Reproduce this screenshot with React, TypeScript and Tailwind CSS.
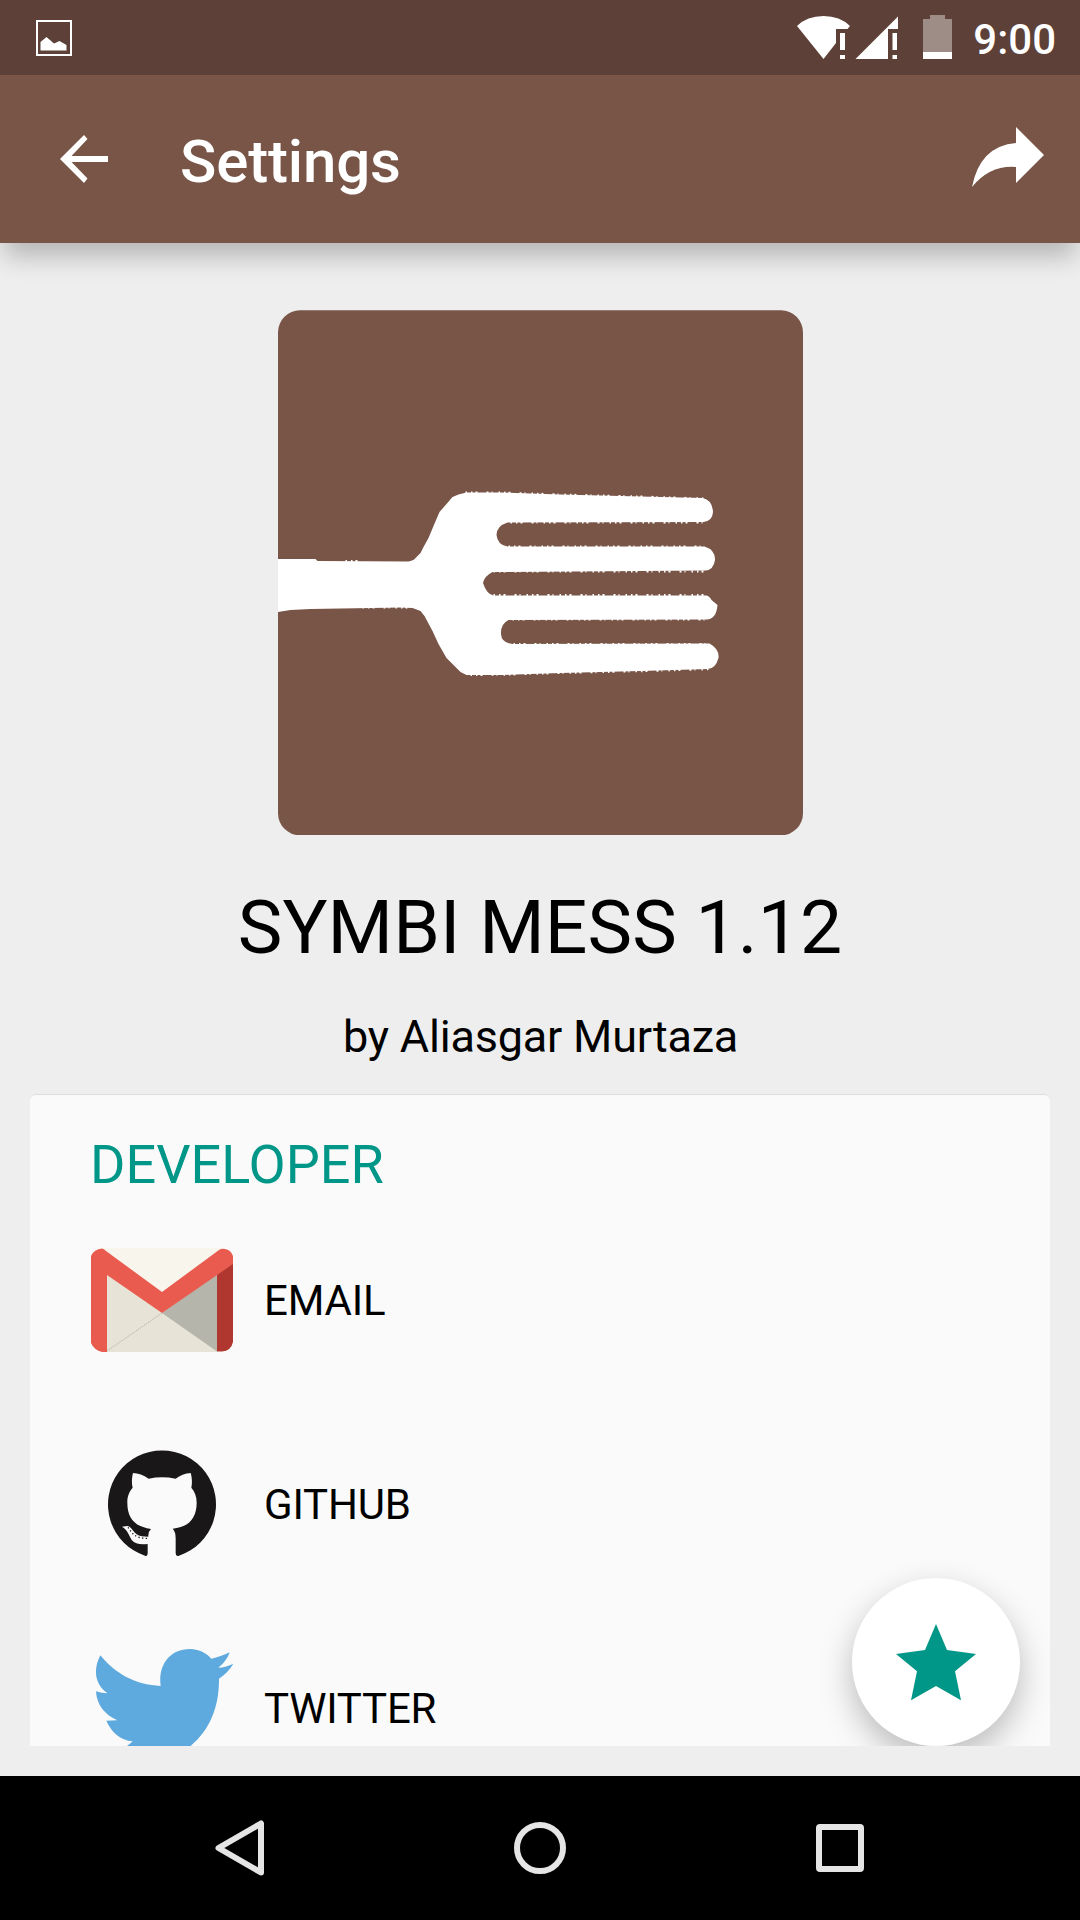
import React from "react";

const forkUpper = "M465 492.500L500 492.500L560 494.500L640 496.500L704 498.500";
const forkLower = "M470 675L500 674.800L560 673L640 671.200L708 669.200";

function ImageIcon() {
  return (
    <svg className="block h-9 w-9" viewBox="0 0 36 36">
      <path d="M1 1h34v34H1z" fill="none" stroke="#fff" strokeWidth="2" />
      <path d="M4.500 22l6-5 7.500 6.500 5.500-2.500 7 4V30.500H4.500z" fill="#fff" />
    </svg>
  );
}

function StatusIcons() {
  return (
    <svg className="block h-[46px] w-[160px]" viewBox="796 14 160 46">
      <path d="M797 26Q807 16 823.500 16T850 26L847.500 29H836V43L823.500 59z" fill="#fff" />
      <path d="M840 33h5v17h-5zM840 55h5v4h-5z" fill="#fff" />
      <path d="M898 16.500V29H888V59H855.500z" fill="#fff" />
      <path d="M892.500 33h4.500v17h-4.500zM892.500 55h4.500v4h-4.500z" fill="#fff" />
      <path d="M930 15h15v4h7v33h-29V19h7z" fill="#9e8d87" />
      <path d="M923 52h29v7h-29z" fill="#fff" />
    </svg>
  );
}

function AppLogo() {
  return (
    <svg className="block h-[525px] w-[525px]" viewBox="277.500 310 525 525">
      <rect x="277.500" y="310.300" width="525" height="525" rx="22" fill="#795548" />
      <path
        fill="#fff"
        d="M277.500 559H315L317 561L408 561.500Q414 560 415 558L420 553L423 547L428 538L433 526L439 512L446 504L452 497L458 494.500L466 492.500L500 492.500L560 494.500L640 496.500L702 498Q712 500 712.500 512Q712 521 703 522L507 522.500Q496 526 496 535Q497 545 507 546.500L704 546.500Q715 550 714.500 560Q713 570 705 570.500L492 572Q484 576 482.500 583Q486 594 493 595.500L706 595.500Q709 596 711 600L717 605Q716 619 706 619.500L508 620Q500 624 500.500 634Q501 643 512 644L709 643.500Q719 649 718 658Q715 669 707 669L640 671L560 673L500 675L466 675L460 672L446 658L438 644L432 631L424 616L420 611L412 608L400 607.500L310 609L290 610L277.500 612z"
      />
      <g fill="none" stroke="#fff" strokeWidth="2" strokeDasharray="1.500 4 1.500 3 2 9 2 3 1 6">
        <path d={forkUpper} />
        <path d={forkLower} />
        <path d="M510 522.500H702M508 546.500H704M493 571.500H704M493 595H706M512 619.500H706M513 644H709" />
        <path d="M345 561H365M362 607.500H408" />
      </g>
    </svg>
  );
}

function GmailIcon() {
  return (
    <svg className="ml-1 block h-[104px] w-[142px]" viewBox="91 1248 142 104">
      <path d="M102 1248H222L162 1298z" fill="#f8f5ed" />
      <path d="M107 1270L162 1310L217 1270V1352H107z" fill="#e7e4d7" />
      <path d="M217 1274L162 1313L217 1351.500z" fill="#b5b5ab" />
      <path d="M107 1351L162 1313" stroke="#b5b5ab" strokeWidth="1" strokeDasharray="1.500 1" />
      <path d="M217 1274L233 1262V1342Q231 1351 222 1351.500H217z" fill="#b0372f" />
      <path
        d="M107 1275V1352H102Q94 1350 91 1343V1256Q94 1249 102 1248.500Q104 1248.500 106 1251L162 1292L219 1250Q222 1248 225 1249Q231 1250 233 1256V1264L162 1313z"
        fill="#e85b4e"
      />
    </svg>
  );
}

function GithubIcon() {
  return (
    <svg className="mb-2 block h-[140px] w-[160px]" viewBox="0 0 480 420">
      <path
        fill="#191718"
        d="M195 377Q203 380 203 370V342C180 344 165 342 155 330C145 311 142 300 126 290L142 288C158 290 160 315 185 319L205 320Q204 305 213 297C165 290 142 265 142 218C142 200 146 188 158 173C154 160 156 140 159 129C175 130 190 135 206 146Q246 138 287 146C300 137 315 130 332 129C336 142 337 160 334 173C345 186 350 200 350 218C350 265 325 292 278 296Q287 305 287 325V370Q287 380 297 377A162 162 0 1 0 195 377z"
      />
      <path d="M144 292C156 308 162 325 202 325" fill="none" stroke="#191718" strokeWidth="4" strokeDasharray="4 7" />
    </svg>
  );
}

function TwitterIcon() {
  return (
    <svg className="mb-4 block h-[140px] w-[160px]" viewBox="0 0 480 420">
      <path
        fill="#5ea9dd"
        d="M61 76C105 130 165 165 242 168C234 110 265 57 330 57C355 57 378 68 394 86C412 82 432 76 449 67C443 85 430 102 415 113C430 113 447 107 460 101C450 118 435 134 417 146C418 230 390 300 332 348C310 370 280 390 240 400C180 405 130 390 90 368Q125 365 158 334C120 330 95 308 79 272L112 271C75 255 50 225 48 184Q65 190 83 190C45 165 38 120 61 76z"
      />
    </svg>
  );
}

function Row({ icon, label }: { icon: React.ReactNode; label: string }) {
  return (
    <div className="flex h-[204px] shrink-0 items-center">
      <div className="flex w-[160px] justify-center">{icon}</div>
      <span className="ml-[24px] pt-[2px] text-[42px] leading-[50px] tracking-[-0.2px]">{label}</span>
    </div>
  );
}

export default function App() {
  return (
    <div
      className="flex h-[1920px] w-[1080px] flex-col overflow-hidden bg-[#eeeeee] text-black"
      style={{ fontFamily: "Roboto, sans-serif" }}
    >
      <div className="relative z-20 flex h-[75px] shrink-0 items-start justify-between bg-[#5d4037] pl-9 pr-[24px] text-white">
        <div className="pt-5">
          <ImageIcon />
        </div>
        <div className="flex items-start gap-[17px] pt-[14px]">
          <StatusIcons />
          <span className="pt-px text-[42px] font-medium leading-[50px]">9:00</span>
        </div>
      </div>
      <header className="relative z-10 flex h-[168px] shrink-0 items-center bg-[#795548] pl-[60px] pr-[36px] text-white shadow-[0_17px_24px_-4px_rgba(0,0,0,0.24)]">
        <svg className="block h-12 w-12" viewBox="0 0 48 48">
          <path d="M48 21V27H11.500L27.500 43.500L24 48L0 24L24 0L27.500 4L11.500 21z" fill="#fff" />
        </svg>
        <h1 className="ml-[72px] grow pt-[5px] text-[60px] font-medium leading-[70px] tracking-[-0.15px]">Settings</h1>
        <svg className="mb-[4px] block h-[60px] w-[72px]" viewBox="0 0 72 60">
          <path d="M0 60Q8 19 44 16V0L72 28L44 56V40Q18 38 0 60z" fill="#fff" />
        </svg>
      </header>
      <main className="flex h-[1533px] shrink-0 flex-col items-center overflow-hidden px-[30px] pt-[67px]">
        <AppLogo />
        <h2 className="mt-[48px] text-[75px] leading-[88px] tracking-[0.1px]">SYMBI MESS 1.12</h2>
        <p className="ml-px mt-[39px] text-[45px] leading-[53px] tracking-[-0.2px]">by Aliasgar Murtaza</p>
        <section className="relative mt-[31px] h-[652px] w-[1020px] shrink-0 overflow-hidden rounded-t-[6px] border-t border-[#dddddd] bg-[#fafafa] pl-[50px]">
          <h3 className="pb-px pl-[10px] pt-[38px] text-[54px] leading-[64px] text-[#009688]">DEVELOPER</h3>
          <Row icon={<GmailIcon />} label="EMAIL" />
          <Row icon={<GithubIcon />} label="GITHUB" />
          <Row icon={<TwitterIcon />} label="TWITTER" />
          <button className="absolute bottom-0 right-[30px] h-[168px] w-[168px] rounded-full bg-white shadow-[0_13px_32px_rgba(0,0,0,0.25)]">
            <svg className="block h-[168px] w-[168px]" viewBox="96 83 504 504">
              <path d="M348 221L381 299L468 311L405 363L423 450L348 407L273 450L291 363L228 311L315 299z" fill="#009688" />
            </svg>
          </button>
        </section>
      </main>
      <nav className="flex h-[144px] shrink-0 items-center bg-black pl-[214px]">
        <svg className="block h-14 w-[50px]" viewBox="0 0 50 56">
          <path d="M47 3.500V52.500L4.500 28z" fill="none" stroke="#e5e5e5" strokeWidth="6" strokeLinejoin="round" />
        </svg>
        <span className="ml-[250px] h-[52px] w-[52px] rounded-full border-[6px] border-[#e5e5e5]" />
        <span className="ml-[250px] h-12 w-12 rounded-[4px] border-[6px] border-[#e5e5e5]" />
      </nav>
    </div>
  );
}
